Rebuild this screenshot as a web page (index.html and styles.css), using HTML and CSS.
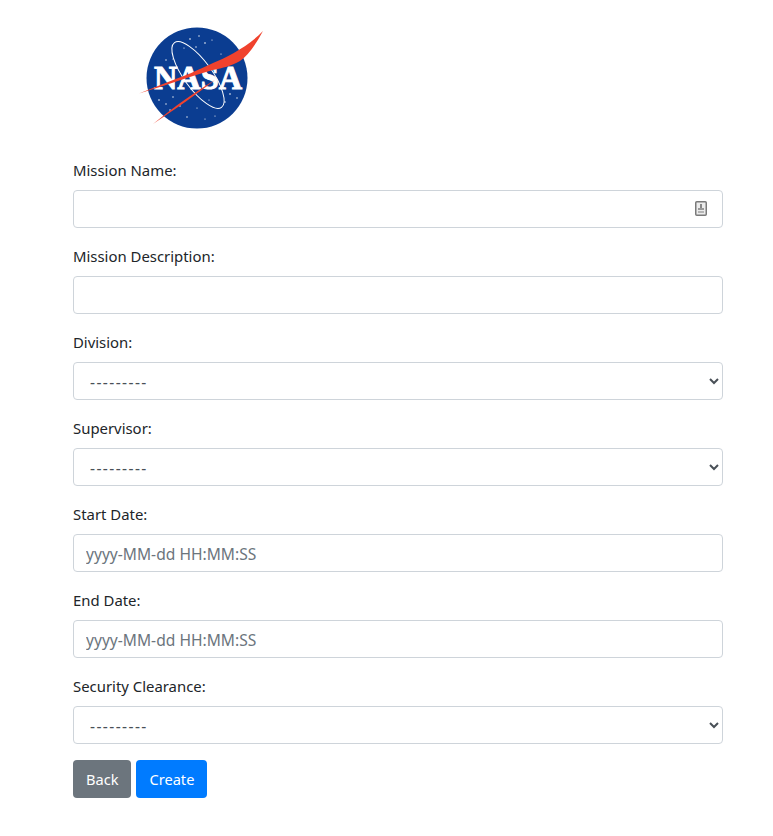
FILE: index.html
```html
<!doctype html>
<html lang="en">
    <head>
        <meta charset="utf-8" />
        <meta name="viewport" content="width=device-width, initial-scale=1.0">
        <link rel="stylesheet" href="styles.css">
        <title>Create Mission</title>
    </head>
    <body>
        <main class="container">
            <svg class="logo" width="126" height="104" viewBox="0 0 126 104" role="img" aria-label="NASA">
                <circle cx="58" cy="52" r="50.5" fill="#0b3d91" />
                <g fill="#fff">
                    <circle cx="51" cy="13" r=".8" /><circle cx="60" cy="10" r=".7" /><circle cx="66" cy="17" r=".8" />
                    <circle cx="57" cy="21" r=".7" /><circle cx="45" cy="22" r=".6" /><circle cx="73" cy="14" r=".6" />
                    <circle cx="27" cy="34" r=".7" /><circle cx="34" cy="33" r=".6" /><circle cx="82" cy="28" r=".6" />
                    <circle cx="20" cy="74" r=".8" /><circle cx="27" cy="78" r=".7" /><circle cx="34" cy="71" r=".7" />
                    <circle cx="31" cy="84" r=".7" /><circle cx="41" cy="80" r=".7" /><circle cx="48" cy="91" r=".7" />
                    <circle cx="58" cy="82" r=".6" /><circle cx="70" cy="74" r=".6" /><circle cx="91" cy="68" r=".8" />
                    <circle cx="98" cy="72" r=".7" /><circle cx="86" cy="76" r=".7" /><circle cx="94" cy="62" r=".6" />
                    <circle cx="76" cy="90" r=".6" /><circle cx="66" cy="93" r=".6" />
                </g>
                <ellipse cx="59" cy="49" rx="14" ry="40" transform="rotate(-36 59 49)" fill="none" stroke="#fff" stroke-width="1" />
                <text class="logo-word" x="59" y="63" text-anchor="middle" textLength="88" lengthAdjust="spacingAndGlyphs">NASA</text>
                <path d="M0 67.5 24 58C45 50 60 44 74 37 88 31 110 20 124 5 116 20 108 30 101 35 92 40 84 42 74 44 55 49 40 55 24 60Z" fill="#f0422d" />
                <path d="M14 98C36 80 56 66 76 54 58 68 38 82 14 98Z" fill="#f0422d" />
            </svg>
            <form class="mission-form">
                <div class="form-group">
                    <label for="name">Mission Name:</label>
                    <div class="input-wrap">
                        <input class="form-control" id="name" type="text">
                        <svg class="field-icon" width="12" height="15" viewBox="0 0 12 15">
                            <rect x=".75" y=".75" width="10.5" height="13.5" rx="1" fill="#ececec" stroke="#7a7a7a" stroke-width="1.5" />
                            <path d="M6 3 6 7" stroke="#888" stroke-width="2" />
                            <rect x="3" y="7" width="6" height="2" fill="#999" />
                            <rect x="3" y="10" width="6" height="2" fill="#b5b5b5" />
                        </svg>
                    </div>
                </div>
                <div class="form-group">
                    <label for="description">Mission Description:</label>
                    <input class="form-control" id="description" type="text">
                </div>
                <div class="form-group">
                    <label for="division">Division:</label>
                    <select class="form-control" id="division"><option>---------</option></select>
                </div>
                <div class="form-group">
                    <label for="supervisor">Supervisor:</label>
                    <select class="form-control" id="supervisor"><option>---------</option></select>
                </div>
                <div class="form-group">
                    <label for="start">Start Date:</label>
                    <input class="form-control" id="start" type="text" placeholder="yyyy-MM-dd HH:MM:SS">
                </div>
                <div class="form-group">
                    <label for="end">End Date:</label>
                    <input class="form-control" id="end" type="text" placeholder="yyyy-MM-dd HH:MM:SS">
                </div>
                <div class="form-group">
                    <label for="clearance">Security Clearance:</label>
                    <select class="form-control" id="clearance"><option>---------</option></select>
                </div>
                <div class="actions">
                    <a class="btn btn-back" href="#">Back</a>
                    <button class="btn btn-create" type="button">Create</button>
                </div>
            </form>
        </main>
    </body>
</html>
```

FILE: styles.css
```css
* {
    box-sizing: border-box;
}
body {
    margin: 0;
    color: #212529;
    background-color: #fff;
    font-family: "Noto Sans", "Open Sans", sans-serif;
    font-size: 14.9px;
    line-height: 24px;
}
.container {
    width: 650px;
    margin-left: 73px;
    padding-top: 26px;
}
.logo {
    display: block;
    margin-left: 66px;
    margin-bottom: 28px;
}
.logo-word {
    fill: #fff;
    stroke: #fff;
    stroke-width: 1px;
    font-family: "Liberation Serif", serif;
    font-weight: 700;
    font-size: 33px;
}
.form-group {
    margin-bottom: 16px;
}
label {
    display: block;
    margin-bottom: 8px;
}
.input-wrap {
    position: relative;
}
.field-icon {
    position: absolute;
    top: 11px;
    right: 16px;
}
.form-control {
    display: block;
    width: 100%;
    height: 38px;
    padding: 7px 12px 5px;
    color: #495057;
    background-color: #fff;
    border: 1px solid #ced4da;
    border-radius: 4px;
    font-family: inherit;
    font-size: 15.6px;
}
select.form-control {
    letter-spacing: 1.4px;
}
.form-control::placeholder {
    color: #6c757d;
}
.actions {
    display: flex;
    gap: 5px;
}
.btn {
    display: block;
    height: 38px;
    padding: 6px 12px;
    color: #fff;
    border: 1px solid transparent;
    border-radius: 4px;
    font-family: inherit;
    font-size: 14.6px;
    line-height: 24px;
    text-decoration: none;
}
.btn-back {
    background-color: #6c757d;
}
.btn-create {
    background-color: #007bff;
}
```
